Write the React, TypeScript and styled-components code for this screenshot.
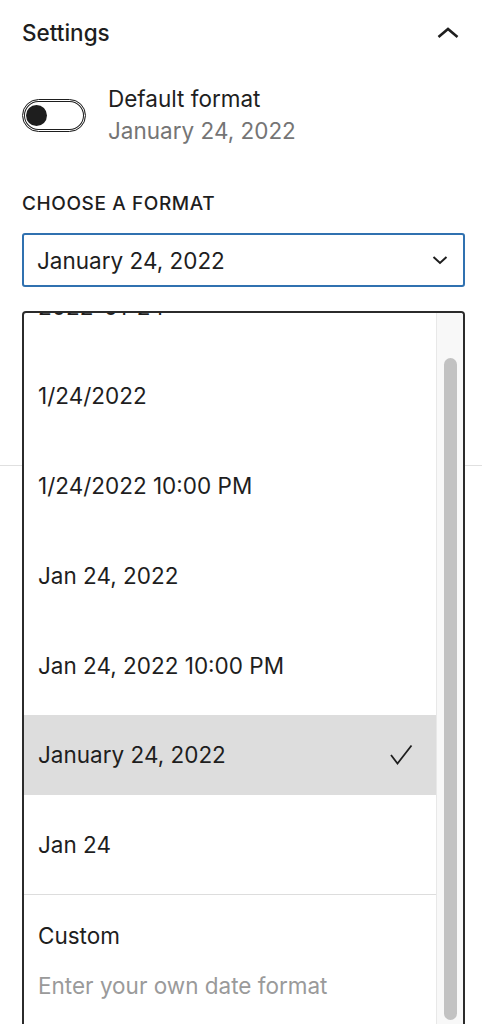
import styled, { createGlobalStyle } from "styled-components";

const GlobalStyle = createGlobalStyle`
  html {
    overflow: hidden;
  }
  body {
    margin: 0;
    min-height: 100vh;
    background: #fff;
    font-family: Inter, "Noto Sans", sans-serif;
    color: #1e1e1e;
  }
`;

const formats = [
  "2022-01-24",
  "1/24/2022",
  "1/24/2022 10:00 PM",
  "Jan 24, 2022",
  "Jan 24, 2022 10:00 PM",
  "January 24, 2022",
  "Jan 24",
];

const current = "January 24, 2022";

function App() {
  return (
    <>
      <GlobalStyle />
      <Panel>
        <PanelHeader>
          <Title>Settings</Title>
          <svg width="24" height="14" viewBox="0 0 24 14">
            <polyline points="2.5,12 12,4 21.5,12" fill="none" stroke="#1e1e1e" strokeWidth="2.6" />
          </svg>
        </PanelHeader>

        <ToggleRow>
          <Toggle />
          <div>
            <ToggleLabel>Default format</ToggleLabel>
            <ToggleHelp>January 24, 2022</ToggleHelp>
          </div>
        </ToggleRow>

        <FieldLabel>Choose a format</FieldLabel>
        <SelectWrap>
          <Select>
            <span>{current}</span>
            <svg width="16" height="10" viewBox="0 0 16 10">
              <polyline points="1.5,2 8,8 14.5,2" fill="none" stroke="#1e1e1e" strokeWidth="2" />
            </svg>
          </Select>

          <Popup>
            <Viewport>
              <OptionList>
                {formats.map((f) => (
                  <Option key={f} $selected={f === current}>
                    <span>{f}</span>
                    {f === current && (
                      <svg width="24" height="22" viewBox="0 0 24 22">
                        <polyline points="2,11 8.5,19.5 22.5,1.5" fill="none" stroke="#1e1e1e" strokeWidth="1.8" />
                      </svg>
                    )}
                  </Option>
                ))}
                <Divider />
                <Custom>
                  <CustomLabel>Custom</CustomLabel>
                  <CustomHint>Enter your own date format</CustomHint>
                </Custom>
              </OptionList>
            </Viewport>
            <Track>
              <Thumb />
            </Track>
          </Popup>
        </SelectWrap>
      </Panel>
    </>
  );
}

const Panel = styled.div`
  box-sizing: border-box;
  height: 466px;
  padding: 0 17px 0 22px;
  border-bottom: 1px solid #e0e0e0;
`;

const PanelHeader = styled.div`
  height: 64px;
  display: flex;
  align-items: center;
  justify-content: space-between;
  padding-right: 5px;
`;

const Title = styled.h2`
  margin: 0;
  font-size: 22.5px;
  font-weight: 500;
`;

const ToggleRow = styled.div`
  margin-top: 19px;
  display: flex;
  align-items: center;
  gap: 22px;
`;

const Toggle = styled.div`
  position: relative;
  box-sizing: border-box;
  width: 64px;
  height: 33px;
  border: 1px solid #1e1e1e;
  border-radius: 17px;
  box-shadow: inset 0 0 0 1px #fff, inset 0 0 0 2px #1e1e1e;

  &::after {
    content: "";
    position: absolute;
    left: 3px;
    top: 5px;
    width: 21px;
    height: 21px;
    border-radius: 50%;
    background: #1e1e1e;
  }
`;

const ToggleLabel = styled.div`
  font-size: 22.5px;
  line-height: 32px;
`;

const ToggleHelp = styled.div`
  font-size: 22.5px;
  line-height: 32px;
  color: #757575;
`;

const FieldLabel = styled.div`
  margin-top: 45px;
  font-size: 19px;
  line-height: 24px;
  font-weight: 500;
  text-transform: uppercase;
  letter-spacing: 0.6px;
`;

const SelectWrap = styled.div`
  position: relative;
  margin-top: 17px;
`;

const Select = styled.div`
  box-sizing: border-box;
  height: 54px;
  display: flex;
  align-items: center;
  justify-content: space-between;
  padding: 0 15px 0 13px;
  border: 2px solid #3071b0;
  border-radius: 3px;
  font-size: 22.5px;
`;

const Popup = styled.div`
  position: absolute;
  top: calc(100% + 24px);
  left: 0;
  right: 0;
  z-index: 1;
  height: 760px;
  display: flex;
  box-sizing: border-box;
  border: 2px solid #2b2b2b;
  border-bottom: none;
  border-radius: 4px 4px 0 0;
  background: #fff;
  overflow: hidden;
`;

const Viewport = styled.div`
  flex: 1;
  overflow: hidden;
`;

const OptionList = styled.div`
  margin-top: -57px;
  padding-top: 10px;
  display: flex;
  flex-direction: column;
  gap: 9.75px;
`;

const Option = styled.div<{ $selected?: boolean }>`
  height: 80px;
  display: flex;
  align-items: center;
  justify-content: space-between;
  padding: 0 23px 0 14px;
  font-size: 22.5px;
  background: ${(p) => (p.$selected ? "#dddddd" : "transparent")};
`;

const Divider = styled.div`
  height: 1px;
  background: #dddddd;
`;

const Custom = styled.div`
  padding: 15px 14px 0;
`;

const CustomLabel = styled.div`
  font-size: 22.5px;
  line-height: 32px;
`;

const CustomHint = styled.div`
  margin-top: 18px;
  font-size: 22.5px;
  line-height: 32px;
  color: #9a9a9a;
`;

const Track = styled.div`
  width: 26px;
  border-left: 1px solid #e8e8e8;
  background: #f8f8f8;
`;

const Thumb = styled.div`
  margin: 45px 0 0 7px;
  width: 13px;
  height: 662px;
  border-radius: 7px;
  background: #c2c2c2;
`;

export default App;
